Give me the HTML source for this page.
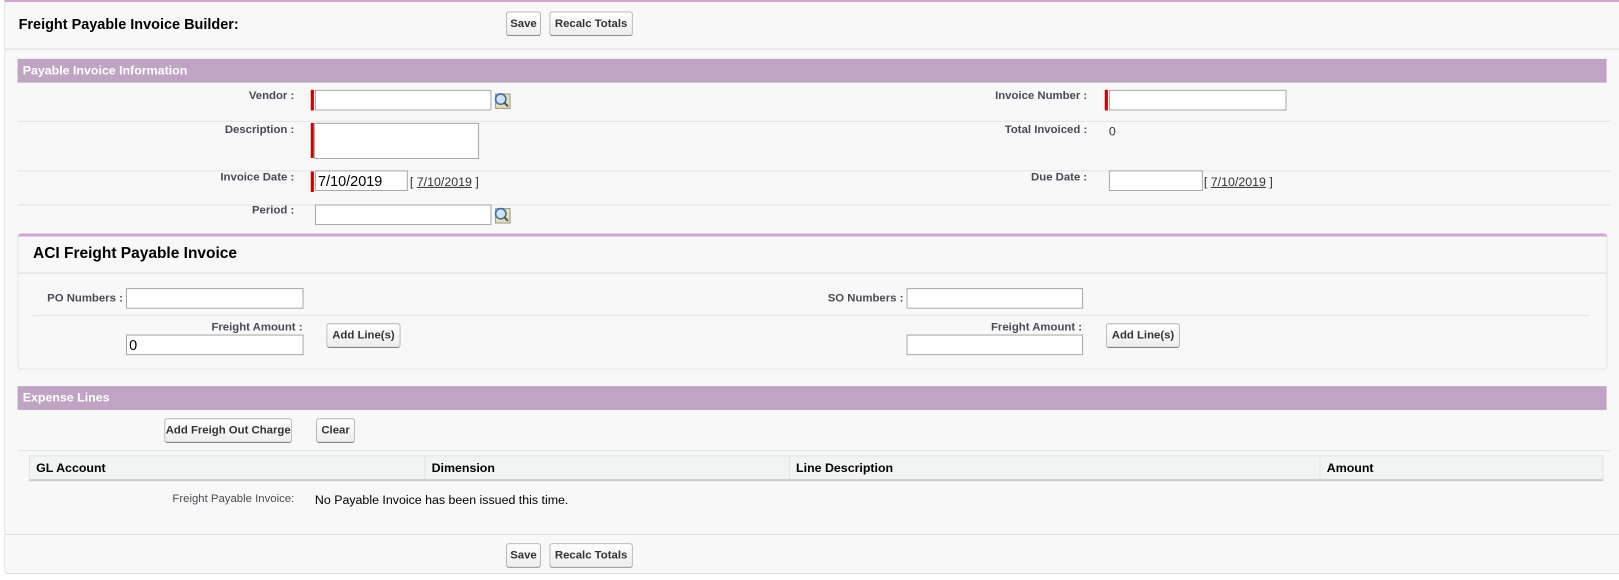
<!DOCTYPE html>
<html><head><style>
*{box-sizing:border-box;margin:0;padding:0}
html,body{width:1619px;height:580px;overflow:hidden}
body{background:#fff;font-family:"Liberation Sans",Arial,sans-serif;font-size:12px;color:#333;position:relative}
#w{position:absolute;left:0;top:0;width:1568px;height:562px;transform:scale(1.0325);transform-origin:0 0}
.a{position:absolute}
.outer{left:4px;top:0;width:1570px;height:556px;background:#f8f8f8;border-top:2px solid #d4a6d4;border-left:1px solid #e0e0e0;border-bottom:1px solid #e0e0e0;border-radius:0 0 0 4px}
.btn{position:absolute;height:24px;border:1px solid #b5b5b5;border-bottom-color:#7f7f7f;border-radius:3px;background:linear-gradient(#fff,#ededed);font-size:11px;font-weight:bold;color:#333;text-align:center;line-height:22px}
.hdr{position:absolute;left:17px;width:1539px;height:23px;background:#c0a4c4;color:#fff;font-weight:bold;font-size:12px;line-height:23px;padding-left:5px}
.lbl{position:absolute;font-size:11px;font-weight:bold;color:#4a4a56;text-align:right}
.inp{position:absolute;background:#fff;border:1px solid #a9a9a9;height:20px;font-size:13px;padding-left:2px;line-height:18px;color:#000}
.req{position:absolute;width:3px;background:#c00}
.sep{position:absolute;height:1px;background:#e3e3e3}
.lk{position:absolute;width:18px;height:18px}
a{color:#333}
</style></head><body><div id="w">
<div class="a outer"></div>
<div class="a" style="left:18px;top:15px;font-size:14px;font-weight:bold;color:#000">Freight Payable Invoice Builder:</div>
<div class="btn" style="left:490px;top:11px;width:34px">Save</div>
<div class="btn" style="left:532px;top:11px;width:81px">Recalc Totals</div>
<div class="sep" style="left:5px;top:47px;width:1570px;background:#dcdcdc"></div>

<div class="hdr" style="top:57px">Payable Invoice Information</div>

<div class="lbl" style="left:150px;width:135px;top:87px">Vendor :</div>
<div class="req" style="left:301px;top:87px;height:20px"></div>
<div class="inp" style="left:305px;top:87px;width:171px"></div>
<svg class="lk" style="left:477px;top:88px" viewBox="0 0 18 18"><rect x="3" y="3" width="14" height="14" fill="#e8e0b0" stroke="#999"/><circle cx="8" cy="8" r="5" fill="#cfe3f5" stroke="#3a6ea5" stroke-width="1.5"/><line x1="11" y1="11" x2="15" y2="15" stroke="#555" stroke-width="2"/></svg>
<div class="lbl" style="left:850px;width:203px;top:87px">Invoice Number :</div>
<div class="req" style="left:1070px;top:87px;height:20px"></div>
<div class="inp" style="left:1074px;top:87px;width:172px"></div>
<div class="sep" style="left:17px;top:117px;width:1543px"></div>

<div class="lbl" style="left:150px;width:135px;top:120px">Description :</div>
<div class="req" style="left:301px;top:119px;height:34px"></div>
<div class="inp" style="left:304px;top:119px;width:160px;height:35px"></div>
<div class="lbl" style="left:850px;width:203px;top:120px">Total Invoiced :</div>
<div class="a" style="left:1074px;top:120px;font-size:12px">0</div>
<div class="sep" style="left:17px;top:165px;width:1543px"></div>

<div class="lbl" style="left:150px;width:135px;top:166px">Invoice Date :</div>
<div class="req" style="left:301px;top:166px;height:20px"></div>
<div class="inp" style="left:305px;top:165px;width:90px;font-size:14px">7/10/2019</div>
<div class="a" style="left:397px;top:169px">[ <a href="#">7/10/2019</a> ]</div>
<div class="lbl" style="left:850px;width:203px;top:166px">Due Date :</div>
<div class="inp" style="left:1074px;top:165px;width:91px"></div>
<div class="a" style="left:1166px;top:169px">[ <a href="#">7/10/2019</a> ]</div>
<div class="sep" style="left:17px;top:198px;width:1543px"></div>

<div class="lbl" style="left:150px;width:135px;top:198px">Period :</div>
<div class="inp" style="left:305px;top:198px;width:171px"></div>
<svg class="lk" style="left:477px;top:199px" viewBox="0 0 18 18"><rect x="3" y="3" width="14" height="14" fill="#e8e0b0" stroke="#999"/><circle cx="8" cy="8" r="5" fill="#cfe3f5" stroke="#3a6ea5" stroke-width="1.5"/><line x1="11" y1="11" x2="15" y2="15" stroke="#555" stroke-width="2"/></svg>

<div class="a" style="left:17px;top:226px;width:1540px;height:132px;border:1px solid #e3e3e3;border-top:3px solid #d3a6d3;border-radius:4px;background:#f8f8f8"></div>
<div class="a" style="left:32px;top:237px;font-size:15px;font-weight:bold;color:#000">ACI Freight Payable Invoice</div>
<div class="sep" style="left:18px;top:264px;width:1538px;background:#dcdcdc"></div>

<div class="lbl" style="left:30px;width:89px;top:283px">PO Numbers :</div>
<div class="inp" style="left:122px;top:279px;width:172px"></div>
<div class="lbl" style="left:760px;width:115px;top:283px">SO Numbers :</div>
<div class="inp" style="left:878px;top:279px;width:171px"></div>
<div class="sep" style="left:32px;top:305px;width:1508px"></div>

<div class="lbl" style="left:150px;width:143px;top:311px">Freight Amount :</div>
<div class="inp" style="left:122px;top:324px;width:172px;font-size:14px">0</div>
<div class="btn" style="left:316px;top:313px;width:72px">Add Line(s)</div>
<div class="lbl" style="left:900px;width:148px;top:311px">Freight Amount :</div>
<div class="inp" style="left:878px;top:324px;width:171px"></div>
<div class="btn" style="left:1071px;top:313px;width:72px">Add Line(s)</div>

<div class="hdr" style="top:374px">Expense Lines</div>
<div class="btn" style="left:159px;top:405px;width:124px">Add Freigh Out Charge</div>
<div class="btn" style="left:306px;top:405px;width:38px">Clear</div>
<div class="sep" style="left:17px;top:436px;width:1543px"></div>

<div class="a" style="left:28px;top:441px;width:1525px;height:25px;background:#f2f3f3;border:1px solid #e0e3e5;border-bottom:2px solid #ccc"></div>
<div class="a" style="left:411px;top:442px;width:1px;height:22px;background:#e0e3e5"></div>
<div class="a" style="left:764px;top:442px;width:1px;height:22px;background:#e0e3e5"></div>
<div class="a" style="left:1278px;top:442px;width:1px;height:22px;background:#e0e3e5"></div>
<div class="a" style="left:35px;top:446px;font-size:12px;font-weight:bold;color:#000">GL Account</div>
<div class="a" style="left:418px;top:446px;font-size:12px;font-weight:bold;color:#000">Dimension</div>
<div class="a" style="left:771px;top:446px;font-size:12px;font-weight:bold;color:#000">Line Description</div>
<div class="a" style="left:1285px;top:446px;font-size:12px;font-weight:bold;color:#000">Amount</div>

<div class="a" style="left:100px;width:185px;top:477px;text-align:right;font-size:11px;color:#4a4a56">Freight Payable Invoice:</div>
<div class="a" style="left:305px;top:477px;font-size:12px;color:#000">No Payable Invoice has been issued this time.</div>

<div class="sep" style="left:5px;top:517px;width:1570px;background:#dcdcdc"></div>
<div class="btn" style="left:490px;top:526px;width:34px">Save</div>
<div class="btn" style="left:532px;top:526px;width:81px">Recalc Totals</div>
</div></body></html>
